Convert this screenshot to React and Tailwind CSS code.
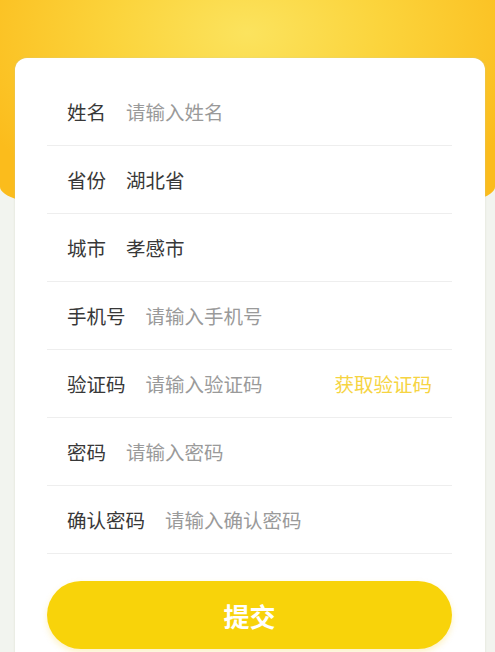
import React from "react";

const rows = [
  { label: "姓名", value: "请输入姓名", ph: true },
  { label: "省份", value: "湖北省" },
  { label: "城市", value: "孝感市" },
  { label: "手机号", value: "请输入手机号", ph: true },
  { label: "验证码", value: "请输入验证码", ph: true, code: true },
  { label: "密码", value: "请输入密码", ph: true },
  { label: "确认密码", value: "请输入确认密码", ph: true },
];

export default function App() {
  return (
    <div
      className="h-[652px] w-full bg-[#f2f4ef] overflow-hidden"
      style={{ fontFamily: '"Noto Sans CJK SC", "Noto Sans", sans-serif' }}
    >
      <div className="h-[221px] w-full bg-[radial-gradient(ellipse_60%_90%_at_50%_15%,#fbe35e_0%,#fbd43c_45%,#fbbc1c_100%)] [border-radius:0_0_50%_50%/0_0_34px_34px]" />
      <div className="-mt-[163px] ml-[15px] w-[470px] bg-white rounded-[12px] pl-8 pr-[33px] pt-5 pb-10 shadow-[0_0_2px_rgba(200,205,180,0.6)]">
        {rows.map((r) => (
          <div
            key={r.label}
            className="h-[68px] flex items-center px-5 border-b border-[#eeeeee] text-[19.5px] leading-none"
          >
            <span className="text-[#383838] mr-[20px]">{r.label}</span>
            <span className={r.ph ? "text-[#9a9a9a]" : "text-[#383838]"}>{r.value}</span>
            {r.code && <span className="ml-auto text-[#f6d442]">获取验证码</span>}
          </div>
        ))}
        <button className="mt-[27px] w-full h-[68px] rounded-full bg-[#f8d30a] text-white text-[26px] font-bold flex items-center justify-center shadow-[0_3px_6px_rgba(248,200,10,0.25)]">
          提交
        </button>
      </div>
    </div>
  );
}
